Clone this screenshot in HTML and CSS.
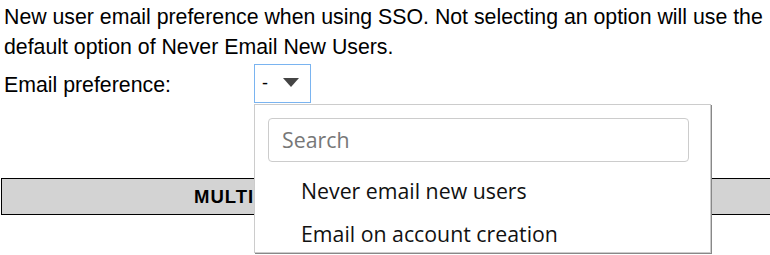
FILE: index.html
```html
<!DOCTYPE html>
<html>
<head>
<meta charset="utf-8">
<link rel="stylesheet" href="styles.css">
</head>
<body>
<div class="page">
  <p class="desc">New user email preference when using SSO. Not selecting an option will use the default option of Never Email New Users.</p>
  <div class="field">
    <span class="label">Email preference:</span>
    <div class="select-wrap">
      <div class="select">
        <span class="value">-</span>
        <svg class="caret" width="16" height="10" viewBox="0 0 16 10"><path d="M0 0 H16 L8 9 Z" fill="#444"/></svg>
      </div>
      <div class="menu">
        <div class="search">Search</div>
        <ul class="options">
          <li>Never email new users</li>
          <li>Email on account creation</li>
        </ul>
      </div>
    </div>
  </div>
  <div class="section-bar">MULTIFACTOR AUTHENTICATION SETTINGS</div>
</div>
</body>
</html>
```
FILE: styles.css
```css
html, body {
  margin: 0;
  padding: 0;
  background: #fff;
}
.page {
  box-sizing: border-box;
  width: 770px;
  height: 255px;
  overflow: hidden;
  padding: 0 0 0 4px;
  font-family: "Liberation Sans", Arial, sans-serif;
  font-size: 21.3px;
  color: #000;
}
.desc {
  margin: 0;
  padding-top: 2px;
  line-height: 30px;
}
.field {
  display: flex;
  align-items: center;
  height: 40px;
  margin-top: 1px;
}
.label {
  width: 250px;
  padding-top: 4px;
}
.select-wrap {
  position: relative;
}
.select {
  box-sizing: border-box;
  width: 57px;
  height: 39px;
  border: 1px solid #7ab4f0;
  display: flex;
  align-items: center;
  padding-left: 7px;
  gap: 15px;
}
.value {
  font-size: 18px;
}
.menu {
  position: absolute;
  left: 0;
  top: 40px;
  width: 457px;
  height: 149px;
  box-sizing: border-box;
  background: #fff;
  border: 1px solid #ccc;
  box-shadow: 1px 1px 0 #888;
  padding: 13px 21px 0 13px;
  font-family: "Open Sans", sans-serif;
  z-index: 2;
}
.search {
  box-sizing: border-box;
  height: 44px;
  border: 1px solid #ccc;
  border-radius: 4px;
  padding-left: 13px;
  line-height: 42px;
  font-size: 21.3px;
  color: #777;
}
.options {
  list-style: none;
  margin: 7px 0 0 0;
  padding: 0 0 0 33px;
  font-size: 21.3px;
  color: #111;
}
.options li {
  line-height: 43px;
}
.section-bar {
  margin-top: 75px;
  margin-left: -3px;
  width: 800px;
  height: 37px;
  box-sizing: border-box;
  border: 1px solid #000;
  background: #d3d3d3;
  font-weight: bold;
  font-size: 18.5px;
  letter-spacing: 1px;
  line-height: 35px;
  padding-left: 192px;
}
```
